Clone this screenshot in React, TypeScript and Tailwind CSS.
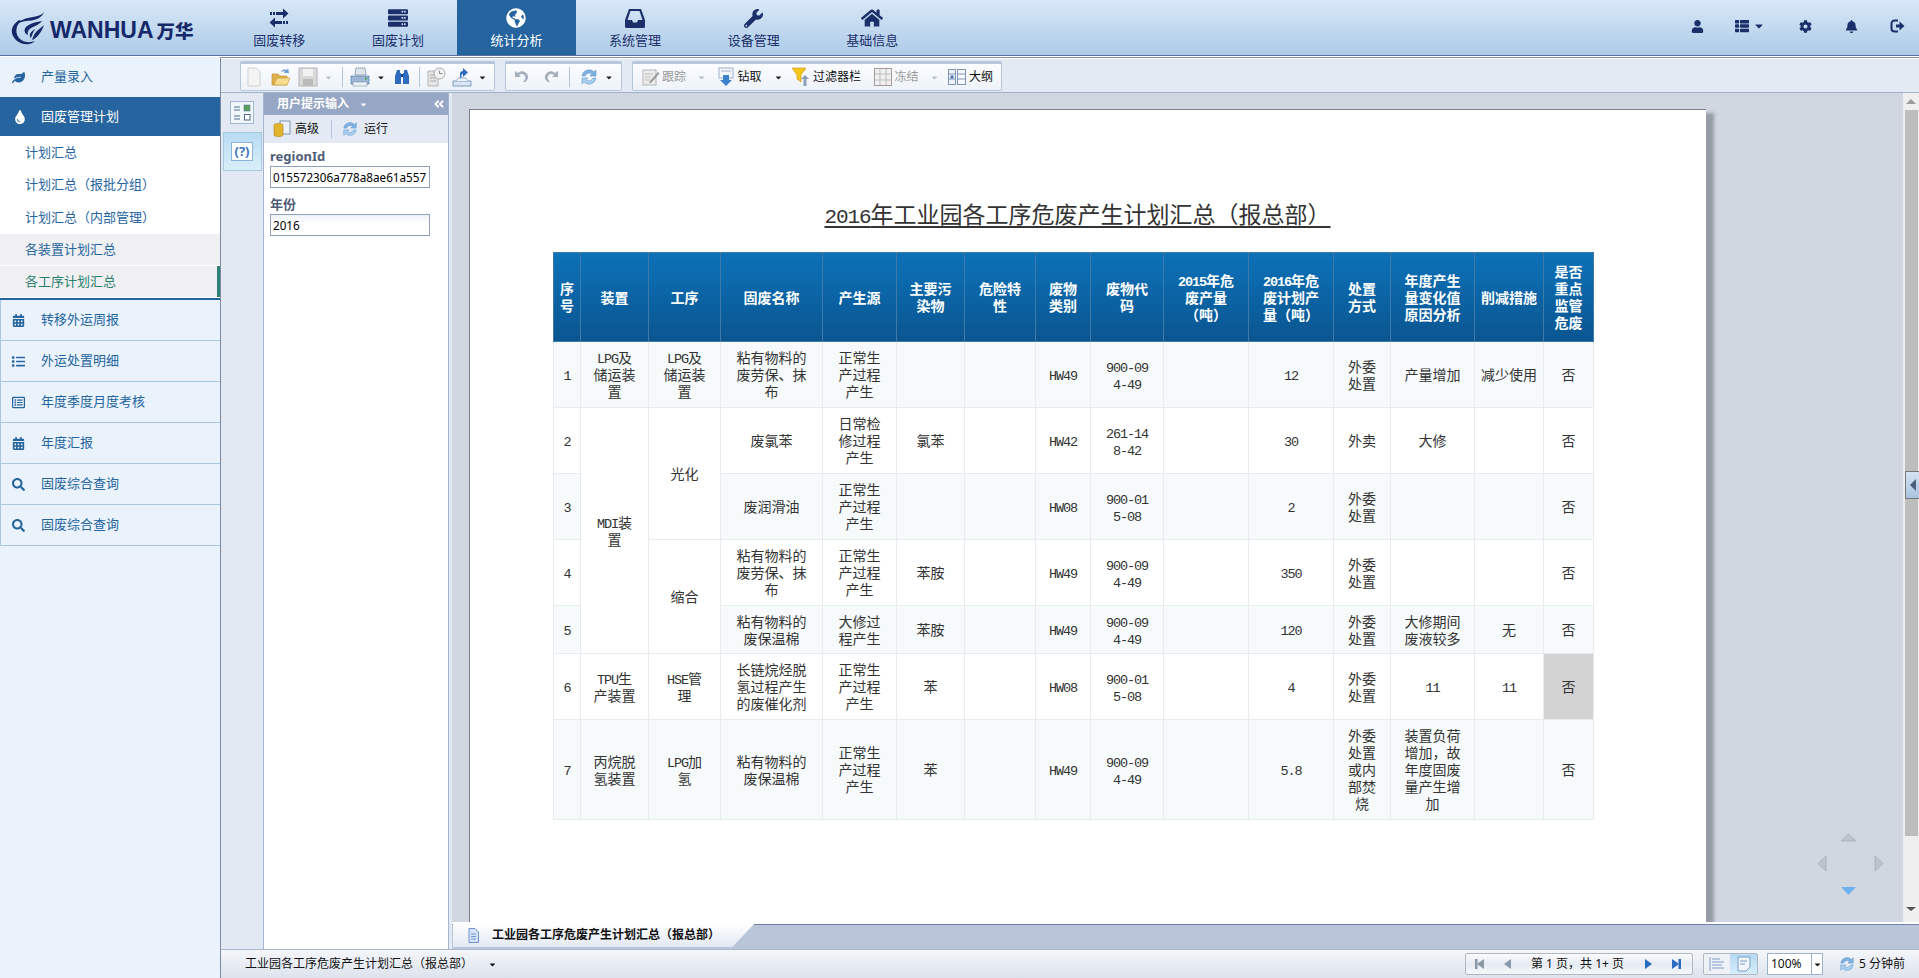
import type { ReactNode } from 'react'
import {
  FaServer,
  FaGlobeAmericas,
  FaWrench,
  FaHome,
  FaUser,
  FaThList,
  FaCog,
  FaBell,
  FaLeaf,
  FaTint,
  FaCalendarAlt,
  FaList,
  FaRegListAlt,
  FaSearch,
  FaCaretDown,
  FaAngleDoubleLeft,
} from 'react-icons/fa'

const navy = '#1b2f6b'

function TransferIcon() {
  return (
    <svg width="20" height="20" viewBox="0 0 20 20" fill={navy}>
      <path d="M7 4h7V0.500l5.500 5-5.500 5V7H7z" />
      <path d="M13 16H6v3.500l-5.500-5 5.500-5V13h7z" />
      <rect x="1" y="4" width="2" height="3" />
      <rect x="4" y="4" width="2" height="3" />
      <rect x="14" y="13" width="2" height="3" />
      <rect x="17" y="13" width="2" height="3" />
    </svg>
  )
}

function InboxIcon() {
  return (
    <svg width="20" height="19" viewBox="0 0 20 19" fill={navy}>
      <path
        fillRule="evenodd"
        d="M4 0h12l4 11v6.500a1.500 1.500 0 0 1-1.500 1.500h-17A1.500 1.500 0 0 1 0 17.500V11zM5.500 2l-3 9H7l1 2.500h4L13 11h4.500l-3-9z"
      />
    </svg>
  )
}

function LogoutIcon() {
  return (
    <svg width="16" height="16" viewBox="0 0 16 16" fill="none">
      <path d="M9 2.500H5.500A3 3 0 0 0 2.500 5.500v5a3 3 0 0 0 3 3H9" stroke={navy} strokeWidth="2" />
      <path d="M7 6.500h3.500V3.500L15.500 8l-5 4.500v-3H7z" fill={navy} />
    </svg>
  )
}

function Logo() {
  return (
    <div className="flex w-[220px] items-center pl-[11px] pt-px">
      <svg width="35" height="33" viewBox="0 0 35 33" fill="#14286a">
        <path d="M8 8C2 12-1 18 2 24c3 6 10 9 16 8 3-.5 5-2 6-3-5 2-11 1.500-15-2C4 23 4 14 10 9z" />
        <path d="M33 0c-2 3-6 4-11 5C15 6 9 8 6 12c5-3 10-3 15-3.500 5-1 10-3 12-8.500z" />
        <path d="M31 9c-7 1-13 3-16 6-2 2-2 5 0 7l2 1c-1-3 0-5 3-7 4-2 9-4 11-7z" />
        <path d="M33 13c-2 2-5 4-7 6-3 3-4 6-5 9 3-1 6-4 8-7 2-3 3-5 4-8z" />
        <path d="M24 17c-2 1-4 3-5 5-.5 2 0 3 1 4 1-3 2-6 4-9z" />
      </svg>
      <span className="ml-[4px] mt-[5px] text-[23px] font-bold whitespace-nowrap text-[#14286a] [font-family:'Liberation_Sans',sans-serif]">
        WANHUA
      </span>
      <span className="ml-[3px] mt-[5px] text-[18.500px] leading-none font-black whitespace-nowrap text-[#14286a] [font-family:'Noto_Sans_CJK_SC',sans-serif]">
        万华
      </span>
    </div>
  )
}

const navItems: { label: string; icon: ReactNode; active?: boolean }[] = [
  { label: '固废转移', icon: <TransferIcon /> },
  { label: '固废计划', icon: <FaServer size={20} /> },
  { label: '统计分析', icon: <FaGlobeAmericas size={20} />, active: true },
  { label: '系统管理', icon: <InboxIcon /> },
  { label: '设备管理', icon: <FaWrench size={19} /> },
  { label: '基础信息', icon: <FaHome size={22} /> },
]

function Header() {
  return (
    <header className="flex h-[56px] shrink-0 border-b border-[#5b6f9c] bg-linear-to-b from-[#d8e8f8] to-[#adcbe7]">
      <Logo />
      {navItems.map((item) => (
        <div
          key={item.label}
          className={`flex w-[118.600px] flex-col items-center pt-[7px] ${item.active ? 'bg-[#25649e] text-white' : 'text-[#1b2f6b]'}`}
        >
          <div className="flex h-[22px] items-center">{item.icon}</div>
          <div className="mt-[2px] text-[13px] leading-[18px]">{item.label}</div>
        </div>
      ))}
      <div className="ml-auto flex items-center pr-[14px] pb-[3px] text-[#1b2f6b]">
        <FaUser size={13} />
        <div className="ml-[31px] flex items-center">
          <FaThList size={14} />
          <FaCaretDown size={12} className="ml-[4px]" />
        </div>
        <FaCog size={13} className="ml-[34px]" />
        <FaBell size={13} className="ml-[33px]" />
        <div className="ml-[31px]">
          <LogoutIcon />
        </div>
      </div>
    </header>
  )
}

const lowerMenu: { label: string; icon: ReactNode }[] = [
  { label: '转移外运周报', icon: <FaCalendarAlt size={13} /> },
  { label: '外运处置明细', icon: <FaList size={13} /> },
  { label: '年度季度月度考核', icon: <FaRegListAlt size={13} /> },
  { label: '年度汇报', icon: <FaCalendarAlt size={13} /> },
  { label: '固废综合查询', icon: <FaSearch size={13} /> },
  { label: '固废综合查询', icon: <FaSearch size={13} /> },
]

function Sidebar() {
  return (
    <aside className="flex w-[221px] shrink-0 flex-col border-r border-[#7b8ba3] bg-[#eaf3fb] text-[13px] text-[#25649e]">
      <div className="flex h-[40px] items-center pl-[12px]">
        <FaLeaf size={13} />
        <span className="ml-[16px]">产量录入</span>
      </div>
      <div className="flex h-[39px] items-center bg-[#25649e] pl-[13px] text-white">
        <FaTint size={14} />
        <span className="ml-[14px]">固废管理计划</span>
      </div>
      <div className="flex h-[164px] flex-col border-b-2 border-[#25649e] bg-white">
        <div className="flex h-[32.700px] items-center pl-[25px]">计划汇总</div>
        <div className="flex h-[32.700px] items-center pl-[25px]">计划汇总（报批分组）</div>
        <div className="flex h-[32.600px] items-center pl-[25px]">计划汇总（内部管理）</div>
        <div className="flex h-[31px] items-center bg-[#f0f0f2] pl-[25px]">各装置计划汇总</div>
        <div className="mt-px flex h-[31px] items-center border-r-[3px] border-[#2f8075] bg-[#f0f0f2] pl-[25px] text-[#2a8070]">
          各工序计划汇总
        </div>
      </div>
      {lowerMenu.map((item, i) => (
        <div key={i} className="flex h-[41px] items-center border-b border-l border-[#a8c8e4] pl-[11px]">
          <span className="w-[29px]">{item.icon}</span>
          <span>{item.label}</span>
        </div>
      ))}
    </aside>
  )
}

const Caret = ({ w, muted }: { w: number; muted?: boolean }) => (
  <span className="flex shrink-0 justify-center" style={{ width: w }}>
    <FaCaretDown size={9} color={muted ? '#b5bfcc' : '#222'} />
  </span>
)

const Sep = () => <span className="h-[20px] w-px shrink-0 bg-[#b4c4dc]" />

const Slot = ({ w, children }: { w: number; children?: ReactNode }) => (
  <span className="flex shrink-0 items-center justify-center" style={{ width: w }}>
    {children}
  </span>
)

const NewIcon = () => (
  <svg width="16" height="20" viewBox="0 0 16 20">
    <path d="M2 1h8l4 4v14H2z" fill="#f4f4f4" stroke="#cfcfcf" />
  </svg>
)
const OpenIcon = () => (
  <svg width="20" height="20" viewBox="0 0 20 20">
    <path d="M1 18V7h6l2 2h7v9z" fill="#e2b04a" stroke="#b98a2a" strokeWidth=".6" />
    <path d="M3 18l3-7h13l-3 7z" fill="#f6dc8e" stroke="#c39a3a" strokeWidth=".6" />
    <path d="M10 5c1-3 4-3 6-2l1-2 1 5-5 0 1-1.500c-1-.5-3-.5-4 .5z" fill="#6d9fd6" />
  </svg>
)
const SaveIcon = () => (
  <svg width="20" height="20" viewBox="0 0 20 20">
    <rect x="1" y="1" width="18" height="18" fill="#d9d9d9" stroke="#b5b5b5" />
    <rect x="5" y="2" width="10" height="7" fill="#f3f3f3" />
    <rect x="5" y="12" width="10" height="7" fill="#bbb" />
  </svg>
)
const PrintIcon = () => (
  <svg width="20" height="20" viewBox="0 0 20 20">
    <path d="M6 1h9l1 7H5z" fill="#dfe6ee" stroke="#7d8ea3" strokeWidth=".7" />
    <path d="M1 9h18v8H1z" fill="#9db6d4" stroke="#5a7da6" strokeWidth=".7" />
    <rect x="3" y="15" width="14" height="4" fill="#eef2f6" stroke="#7d8ea3" strokeWidth=".6" />
    <rect x="15" y="10.500" width="2" height="2" fill="#3aa84a" />
  </svg>
)
const BinocularIcon = () => (
  <svg width="16" height="16" viewBox="0 0 16 16" fill="#2f6cc0">
    <path d="M3 1h3v3h1v11H1V7z" />
    <path d="M10 1h3l2 6v8H9V4h1z" />
    <rect x="7" y="5" width="2" height="3" fill="#16407e" />
  </svg>
)
const HistoryIcon = () => (
  <svg width="20" height="20" viewBox="0 0 20 20">
    <path d="M2 4h10v15H2z" fill="#e6e6e6" stroke="#b3b3b3" />
    <path d="M4 8h6M4 11h6M4 14h6" stroke="#a8a8a8" />
    <circle cx="13.500" cy="6.500" r="5.500" fill="#f2f2f2" stroke="#a8a8a8" />
    <path d="M13.500 3.500v3h3" stroke="#888" fill="none" />
  </svg>
)
const ExportIcon = () => (
  <svg width="20" height="20" viewBox="0 0 20 20">
    <path d="M1 14h18v5H1z" fill="#dbe5f1" stroke="#7d9cc4" />
    <path d="M4 14l2-3h8l2 3" fill="#eef3f9" stroke="#7d9cc4" strokeWidth=".7" />
    <path d="M8 11V7c0-2 1-3 3-3V1l5 4.500-5 4.500V7c-1 0-1.500.5-1.500 1.500V11z" fill="#2f6cc0" />
  </svg>
)
const SyncIcon = ({ size = 18 }: { size?: number }) => (
  <svg width={size} height={size} viewBox="0 0 18 18">
    <path d="M2 8a7 7 0 0 1 12-4l2-2v6h-6l2-2a4.500 4.500 0 0 0-7 2z" fill="#7fb2e3" stroke="#4f88c4" strokeWidth=".5" />
    <path d="M16 10a7 7 0 0 1-12 4l-2 2v-6h6l-2 2a4.500 4.500 0 0 0 7-2z" fill="#a9d0ef" stroke="#4f88c4" strokeWidth=".5" />
  </svg>
)
const UndoIcon = ({ flip }: { flip?: boolean }) => (
  <svg width="16" height="16" viewBox="0 0 16 16" className={flip ? '-scale-x-100' : ''}>
    <path d="M1 2v6h6L5 6a4 4 0 0 1 6 1c1 2 0 4-2 6h2c3-2 4-5 2-8C11 2 7 1 4 4z" fill="#a5afbc" />
  </svg>
)
const TrailIcon = () => (
  <svg width="18" height="18" viewBox="0 0 18 18">
    <rect x="1" y="2" width="13" height="15" fill="#ececec" stroke="#b5b5b5" />
    <path d="M3 6h8M3 9h6M3 12h5" stroke="#bbb" />
    <path d="M8 13l8-9 1.500 1.500-8 9-2.500 1z" fill="#9a9a9a" />
  </svg>
)
const DrillIcon = () => (
  <svg width="16" height="20" viewBox="0 0 16 20">
    <rect x="1" y="1" width="14" height="10" fill="#f4f7fb" stroke="#9fb2c9" />
    <path d="M3 4h10" stroke="#9fb2c9" />
    <path d="M5 8h6v5h3l-6 6-6-6h3z" fill="#3d82cc" />
  </svg>
)
const FilterIcon = () => (
  <svg width="18" height="20" viewBox="0 0 18 20">
    <path d="M0 1h14L9 8v7l-4-3V8z" fill="#f5c518" stroke="#c9971a" strokeWidth=".6" />
    <path d="M13 8l4 4h-2.500v7h-3v-7H9z" fill="#8aa0b8" />
  </svg>
)
const FreezeIcon = () => (
  <svg width="18" height="18" viewBox="0 0 18 18">
    <rect x=".5" y=".5" width="17" height="17" fill="#f0f0f0" stroke="#a89a9a" />
    <path d="M6 1v16M12 1v16M1 6h16M1 12h16" stroke="#bdbdbd" />
  </svg>
)
const OutlineIcon = () => (
  <svg width="18" height="18" viewBox="0 0 18 18">
    <rect x=".5" y="1.500" width="7" height="15" fill="#eef3f9" stroke="#7f97b5" />
    <rect x="9.500" y="1.500" width="8" height="15" fill="#f7f9fc" stroke="#7f97b5" />
    <path d="M1 6h6M1 11h6M10 6h7M10 11h7" stroke="#7f97b5" />
    <path d="M2 9h4M4 7v4" stroke="#2b55a0" />
  </svg>
)

const Group = ({ w, children }: { w: number; children: ReactNode }) => (
  <div
    className="flex h-[30px] shrink-0 items-center rounded-[2px] border border-t-[3px] border-[#b6c6dd] bg-linear-to-b from-[#fbfcfe] to-[#eef3f9] text-[12px] text-[#111]"
    style={{ width: w }}
  >
    {children}
  </div>
)

function Toolbar() {
  return (
    <div className="flex h-[34px] shrink-0 gap-[10px] border-b border-[#a3b0c9] bg-[#e3eaf3] pl-[19px] pt-[2px]">
      <Group w={255}>
        <Slot w={26}><NewIcon /></Slot>
        <Slot w={27}><OpenIcon /></Slot>
        <Slot w={27}><SaveIcon /></Slot>
        <Caret w={14} muted />
        <Slot w={7} />
        <Sep />
        <Slot w={34}><PrintIcon /></Slot>
        <Caret w={8} />
        <Slot w={34}><BinocularIcon /></Slot>
        <Sep />
        <Slot w={32}><HistoryIcon /></Slot>
        <Slot w={20}><ExportIcon /></Slot>
        <Caret w={20} />
      </Group>
      <Group w={117}>
        <Slot w={32}><UndoIcon /></Slot>
        <Slot w={26}><UndoIcon flip /></Slot>
        <Slot w={5} />
        <Sep />
        <Slot w={3} />
        <Slot w={32}><SyncIcon /></Slot>
        <Caret w={8} />
      </Group>
      <Group w={370}>
        <Slot w={8} />
        <Slot w={20}><TrailIcon /></Slot>
        <Slot w={26}><span className="text-[#9a9a9a]">跟踪</span></Slot>
        <Slot w={7} />
        <Caret w={14} muted />
        <Slot w={8} />
        <Slot w={20}><DrillIcon /></Slot>
        <Slot w={27}>钻取</Slot>
        <Slot w={8} />
        <Caret w={14} />
        <Slot w={6} />
        <Slot w={20}><FilterIcon /></Slot>
        <Slot w={52}>过滤器栏</Slot>
        <Slot w={10} />
        <Slot w={20}><FreezeIcon /></Slot>
        <Slot w={27}><span className="text-[#9a9a9a]">冻结</span></Slot>
        <Slot w={7} />
        <Caret w={14} muted />
        <Slot w={6} />
        <Slot w={20}><OutlineIcon /></Slot>
        <Slot w={28}>大纲</Slot>
      </Group>
    </div>
  )
}

function ParamStrip() {
  return (
    <div className="flex w-[42px] shrink-0 flex-col items-center bg-[#e3e9f2] pt-[8px]">
      <svg width="24" height="23" viewBox="0 0 24 23">
        <rect x=".5" y=".5" width="23" height="22" fill="#f2f7fc" stroke="#9fb8d6" />
        <path d="M4 6h6M4 9h6M4 15h6M4 18h6" stroke="#4e6a92" />
        <rect x="14" y="4" width="6" height="6" fill="#5aa05a" stroke="#4e6a92" strokeWidth=".5" />
        <rect x="14.500" y="13.500" width="5.500" height="5.500" fill="#fff" stroke="#4e6a92" />
      </svg>
      <div className="mt-[8px] flex h-[39px] w-[39px] items-center justify-center border border-[#a5cbe3] bg-linear-to-b from-[#b8dcf2] to-[#d9eff9]">
        <div className="flex h-[19px] w-[22px] items-center justify-center border border-[#8db4dc] bg-white text-[13px] leading-none font-bold text-[#3a73c0]">
          (?)
        </div>
      </div>
    </div>
  )
}

function ParamPanel() {
  return (
    <div className="flex w-[186px] shrink-0 flex-col border-x border-[#a7b5cc] bg-white">
      <div className="flex h-[22px] items-center bg-[#96a7c5] pl-[13px] text-[12px] font-bold text-white">
        用户提示输入
        <FaCaretDown size={9} className="ml-[10px]" />
        <FaAngleDoubleLeft size={12} className="ml-auto mr-[3px]" />
      </div>
      <div className="flex h-[28px] items-center bg-[#e3eaf3] text-[12px] text-[#111]">
        <svg width="18" height="18" viewBox="0 0 18 18" className="ml-[9px]">
          <rect x="7" y="1" width="10" height="13" fill="#e9f0f8" stroke="#7f97b5" />
          <path d="M1 5c0-2 9-2 9 0v10c0 2-9 2-9 0z" fill="#e3b42e" stroke="#a98318" strokeWidth=".6" />
        </svg>
        <span className="ml-[4px]">高级</span>
        <span className="ml-[12px] h-[18px] w-px bg-[#b4c4dc]" />
        <span className="ml-[10px]"><SyncIcon size={16} /></span>
        <span className="ml-[6px]">运行</span>
      </div>
      <div className="flex-1 px-[6px] pt-[6px]">
        <div className="text-[13px] leading-[15px] font-bold text-[#4f5d78]">regionId</div>
        <input
          readOnly
          value="015572306a778a8ae61a557"
          className="h-[22px] w-[160px] border border-[#8ea2c0] pl-[2px] text-[11.700px] text-black outline-none"
        />
        <div className="mt-[9px] text-[13px] leading-[15px] font-bold text-[#4f5d78]">年份</div>
        <input
          readOnly
          value="2016"
          className="h-[22px] w-[160px] border border-[#8ea2c0] bg-linear-to-b from-[#eef2f8] to-white to-40% pl-[2px] text-[11.700px] text-black outline-none"
        />
      </div>
    </div>
  )
}

const colWidths = [27, 68, 72, 102, 74, 68, 71, 55, 73, 85, 85, 57, 84, 69, 50]

const headers = [
  '序\n号', '装置', '工序', '固废名称', '产生源', '主要污\n染物', '危险特\n性', '废物\n类别', '废物代\n码',
  '2015年危\n废产量\n（吨）', '2016年危\n废计划产\n量（吨）', '处置\n方式', '年度产生\n量变化值\n原因分析', '削减措施',
  '是否\n重点\n监管\n危废',
]

const normal = '正常生\n产过程\n产生'
const wuwei = '外委\n处置'
const felao = '粘有物料的\n废劳保、抹\n布'
const baowen = '粘有物料的\n废保温棉'

type Cell = { text: string; rowSpan?: number; white?: boolean; gray?: boolean }
const c = (text: string): Cell => ({ text })
const span = (text: string, rowSpan: number): Cell => ({ text, rowSpan, white: true })

const rows: { h: number; tint: boolean; cells: Cell[] }[] = [
  {
    h: 66, tint: true,
    cells: ['1', 'LPG及\n储运装\n置', 'LPG及\n储运装\n置', felao, normal, '', '', 'HW49', '900-09\n4-49', '', '12', wuwei, '产量增加', '减少使用', '否'].map(c),
  },
  {
    h: 66, tint: false,
    cells: [c('2'), span('MDI装\n置', 4), span('光化', 2), ...['废氯苯', '日常检\n修过程\n产生', '氯苯', '', 'HW42', '261-14\n8-42', '', '30', '外卖', '大修', '', '否'].map(c)],
  },
  {
    h: 66, tint: true,
    cells: [c('3'), ...['废润滑油', normal, '', '', 'HW08', '900-01\n5-08', '', '2', wuwei, '', '', '否'].map(c)],
  },
  {
    h: 66, tint: false,
    cells: [c('4'), span('缩合', 2), ...[felao, normal, '苯胺', '', 'HW49', '900-09\n4-49', '', '350', wuwei, '', '', '否'].map(c)],
  },
  {
    h: 48, tint: true,
    cells: [c('5'), ...[baowen, '大修过\n程产生', '苯胺', '', 'HW49', '900-09\n4-49', '', '120', wuwei, '大修期间\n废液较多', '无', '否'].map(c)],
  },
  {
    h: 66, tint: false,
    cells: [
      ...['6', 'TPU生\n产装置', 'HSE管\n理', '长链烷烃脱\n氢过程产生\n的废催化剂', normal, '苯', '', 'HW08', '900-01\n5-08', '', '4', wuwei, '11', '11'].map(c),
      { text: '否', gray: true },
    ],
  },
  {
    h: 100, tint: true,
    cells: ['7', '丙烷脱\n氢装置', 'LPG加\n氢', baowen, normal, '苯', '', 'HW49', '900-09\n4-49', '', '5.8', '外委\n处置\n或内\n部焚\n烧', '装置负荷\n增加，故\n年度固废\n量产生增\n加', '', '否'].map(c),
  },
]

// latin runs are half width in the report, so they go in a narrowed mono face
function Mixed({ text }: { text: string }) {
  return (
    <>
      {text.split('\n').map((line, n) => (
        <div key={n} className="h-[17px]">
          {line.split(/([0-9A-Za-z.\-]+)/).map((part, i) =>
            i % 2 === 1 ? (
              <span key={i} className="text-[13.500px] leading-none tracking-[-1.100px] [font-family:'Liberation_Mono',monospace]">
                {part}
              </span>
            ) : (
              part
            ),
          )}
        </div>
      ))}
    </>
  )
}

function ReportTable() {
  return (
    <table className="w-[1040px] table-fixed border-collapse text-center text-[14px] leading-[17px] text-[#333]">
      <colgroup>
        {colWidths.map((w, i) => (
          <col key={i} style={{ width: w }} />
        ))}
      </colgroup>
      <thead>
        <tr className="h-[89px] bg-linear-to-b from-[#0c72b8] to-[#0a5590]">
          {headers.map((h, i) => (
            <th key={i} className="border border-[#3f79a8] p-0 font-bold text-white">
              <Mixed text={h} />
            </th>
          ))}
        </tr>
      </thead>
      <tbody>
        {rows.map((row, r) => (
          <tr key={r} style={{ height: row.h }}>
            {row.cells.map((cell, i) => (
              <td
                key={i}
                rowSpan={cell.rowSpan}
                className={`border border-[#e8ecef] p-0 align-middle ${cell.gray ? 'bg-[#d3d3d3]' : row.tint && !cell.white ? 'bg-[#f7fafb]' : 'bg-white'}`}
              >
                <Mixed text={cell.text} />
              </td>
            ))}
          </tr>
        ))}
      </tbody>
    </table>
  )
}

function ReportCanvas() {
  return (
    <div className="relative flex-1 overflow-hidden bg-[#d0d7e0] pl-[17px] pt-[16px]">
      <div className="h-[830px] w-[1237px] border-t border-l border-[#7b7f8c] bg-white pl-[83px] pt-[89px] shadow-[8px_4px_3px_rgba(95,98,110,0.5)]">
        <div className="h-[30px] w-[1040px] pl-[9px] text-center text-[23px] leading-[30px] whitespace-nowrap text-[#333] underline decoration-2 underline-offset-[3px]">
          <span className="text-[21px] leading-none tracking-[-1.100px] [font-family:'Liberation_Mono',monospace]">2016</span>
          年工业园各工序危废产生计划汇总（报总部）
        </div>
        <div className="mt-[23px]">
          <ReportTable />
        </div>
      </div>
      <svg width="70" height="65" viewBox="0 0 70 65" className="absolute right-[18px] bottom-[25px]">
        <path d="M26 9l7.500-7L41 9z" fill="#bcc4cf" stroke="#aab3c0" />
        <path d="M26 55h15l-7.500 8z" fill="#6fb0ee" />
        <path d="M11 24v15l-8-7.500z" fill="#bcc4cf" stroke="#aab3c0" />
        <path d="M60 24v15l8-7.500z" fill="#bcc4cf" stroke="#aab3c0" />
      </svg>
    </div>
  )
}

function ScrollBar() {
  return (
    <div className="relative flex w-[16px] shrink-0 flex-col items-center bg-[#efefef]">
      <div className="flex h-[17px] items-center">
        <span className="h-0 w-0 border-x-[5px] border-b-[5px] border-x-transparent border-b-[#9a9a9a]" />
      </div>
      <div className="h-[726px] w-[13px] bg-[#bdbdbd]" />
      <div className="flex flex-1 items-center">
        <span className="mt-[60px] h-0 w-0 border-x-[5px] border-t-[4px] border-x-transparent border-t-[#555]" />
      </div>
      <div className="absolute top-[378px] left-[2px] flex h-[28px] w-[14px] items-center justify-center border border-r-0 border-[#777] bg-linear-to-b from-[#d5e3f3] to-[#a9c3e0]">
        <span className="h-0 w-0 border-y-[6px] border-r-[6px] border-y-transparent border-r-[#4a5f80]" />
      </div>
    </div>
  )
}

function ReportTab() {
  return (
    <div className="relative h-[27px] shrink-0 border-t-2 border-white">
      <div className="h-full border-t border-[#6f83ab] bg-[#b9c5d9]" />
      <div className="absolute -top-px left-px flex h-[24px] w-[302px] items-center bg-linear-to-b from-white to-[#e3e8f2] pl-[15px] text-[12px] font-bold text-[#111] [clip-path:polygon(0_0,100%_0,92.500%_100%,0_100%)]">
        <svg width="11" height="15" viewBox="0 0 11 15">
          <path d="M1 .5h6l3.500 3.500v10.500H1z" fill="#d6e4fa" stroke="#6d93d8" />
          <path d="M3 6h5M3 8.500h5M3 11h5" stroke="#6d93d8" />
        </svg>
        <span className="ml-[13px]">工业园各工序危废产生计划汇总（报总部）</span>
      </div>
    </div>
  )
}

const PagerTri = ({ left, bar, color }: { left?: boolean; bar?: boolean; color: string }) => (
  <svg width="10" height="12" viewBox="0 0 10 12" fill={color} className={left ? '-scale-x-100' : ''}>
    <path d="M1 1l7 5-7 5z" />
    {bar && <rect x="7.500" y="1" width="2.500" height="10" />}
  </svg>
)

function StatusBar() {
  return (
    <div className="flex h-[29px] shrink-0 items-center border-t border-[#a9b6cc] bg-linear-to-b from-[#f4f6fa] to-[#dde3ed] pl-[24px] text-[12px] text-[#111]">
      <span>工业园各工序危废产生计划汇总（报总部）</span>
      <FaCaretDown size={9} className="ml-[15px]" />
      <div className="ml-auto flex h-[22px] w-[228px] items-center rounded-[2px] border border-[#b0b8c4] bg-linear-to-b from-[#fafbfd] via-[#e6ebf2] to-[#f5f7fa]">
        <Slot w={28}><PagerTri left bar color="#8a97a6" /></Slot>
        <Slot w={26}><PagerTri left color="#8a97a6" /></Slot>
        <span className="w-[115px] text-center">第 1 页，共 1+ 页</span>
        <Slot w={27}><PagerTri color="#2a6cc0" /></Slot>
        <Slot w={27}><PagerTri bar color="#2a6cc0" /></Slot>
      </div>
      <div className="ml-[10px] flex h-[22px] w-[55px] items-center rounded-[2px] border border-[#b0b8c4] bg-[#eef1f6]">
        <Slot w={26}>
          <svg width="16" height="14" viewBox="0 0 16 14" stroke="#7d9cc4">
            <path d="M1 0v14M3 2h8M3 5h12M3 8h10M3 11h12" />
          </svg>
        </Slot>
        <span className="flex h-full flex-1 items-center justify-center bg-linear-to-b from-[#b5daf3] to-[#d7edf9]">
          <svg width="14" height="16" viewBox="0 0 14 16">
            <path d="M1 1h12v10l-4 4H1z" fill="#f0f6fc" stroke="#7d9cc4" />
            <path d="M3 5h7M3 8h5" stroke="#7d9cc4" />
          </svg>
        </span>
      </div>
      <div className="ml-[9px] flex h-[22px] w-[56px] items-center border border-[#9db0cc] bg-white">
        <span className="w-[43px] pl-[3px]">100%</span>
        <span className="flex h-full flex-1 items-center justify-center border-l border-[#9db0cc]">
          <FaCaretDown size={9} />
        </span>
      </div>
      <span className="ml-[16px]"><SyncIcon size={16} /></span>
      <span className="ml-[4px] mr-[12px] w-[48px] whitespace-nowrap">5 分钟前</span>
    </div>
  )
}

export default function App() {
  return (
    <div className="flex h-screen w-screen flex-col overflow-hidden bg-white [font-family:'Noto_Sans','Noto_Sans_CJK_SC',sans-serif]">
      <Header />
      <div className="mt-px flex min-h-0 flex-1">
        <Sidebar />
        <div className="flex min-w-0 flex-1 flex-col">
          <div className="h-px shrink-0 bg-[#8a8f99]" />
          <div className="h-px shrink-0 bg-white" />
          <Toolbar />
          <div className="flex min-h-0 flex-1 bg-[#e3e9f2]">
            <ParamStrip />
            <ParamPanel />
            <div className="ml-[3px] flex min-w-0 flex-1 flex-col">
              <div className="flex min-h-0 flex-1">
                <ReportCanvas />
                <ScrollBar />
              </div>
              <ReportTab />
            </div>
          </div>
          <StatusBar />
        </div>
      </div>
    </div>
  )
}
